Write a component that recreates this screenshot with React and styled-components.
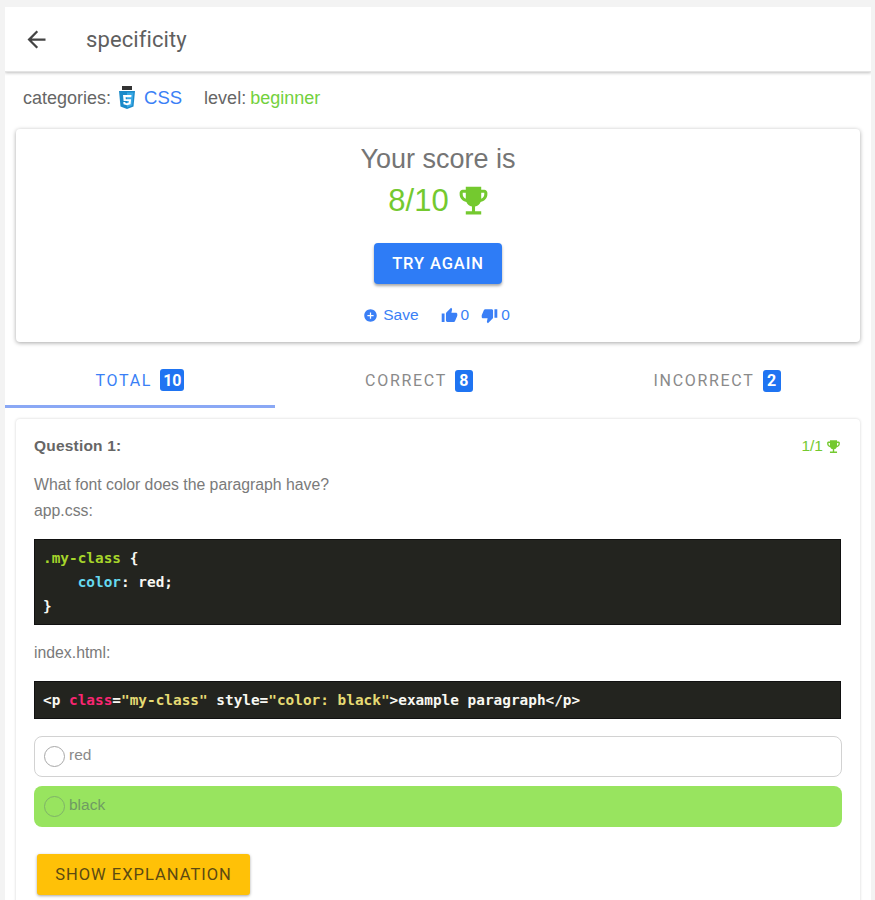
import styled, { createGlobalStyle } from 'styled-components';
import {
  MdArrowBack,
  MdEmojiEvents,
  MdAddCircle,
  MdThumbUp,
  MdThumbDown,
} from 'react-icons/md';

const GlobalStyle = createGlobalStyle`
  html, body {
    margin: 0;
    background: #f3f3f3;
    height: 900px;
    overflow: hidden;
  }
  * {
    box-sizing: border-box;
  }
`;

const Page = styled.div`
  margin: 7px 4px 0 5px;
  height: 893px;
  overflow: hidden;
  background: #fff;
  font-family: 'Liberation Sans', Arial, sans-serif;
  color: #666;
`;

const Toolbar = styled.header`
  height: 65px;
  display: flex;
  align-items: center;
  padding: 0 0 0 18px;
  gap: 36px;
  background: #fff;
  border-bottom: 1px solid #e4e4e4;
  box-shadow: 0 1px 3px rgba(0, 0, 0, 0.25);
  color: #444;
  svg {
    font-size: 27px;
  }
`;

const Title = styled.h1`
  margin: 0;
  font-family: Roboto, sans-serif;
  font-size: 22px;
  font-weight: 400;
  letter-spacing: 0.1px;
  color: #5f5f5f;
`;

const Meta = styled.div`
  height: 57px;
  padding: 0 0 5px 18px;
  display: flex;
  align-items: center;
  font-size: 18px;
  color: #666;
`;

const MetaLabel = styled.span`
  margin-right: ${(p) => p.$gap || 0}px;
`;

const CategoryLink = styled.span`
  color: #3a7ff6;
  font-size: 18.5px;
  margin: 0 22px 0 8px;
`;

const Level = styled.span`
  color: #73d13d;
  margin-left: 4px;
`;

const ScoreCard = styled.section`
  margin: 0 11px;
  height: 213px;
  padding-top: 14px;
  display: flex;
  flex-direction: column;
  align-items: center;
  border-radius: 4px;
  background: #fff;
  box-shadow: 0 1px 4px rgba(0, 0, 0, 0.35);
`;

const ScoreTitle = styled.div`
  font-size: 27px;
  line-height: 32px;
  color: #757575;
`;

const ScoreValue = styled.div`
  margin-top: 7px;
  display: flex;
  align-items: center;
  gap: 6px;
  font-size: 31px;
  line-height: 36px;
  color: #74c92f;
  svg {
    font-size: 37px;
    margin-right: -4px;
  }
`;

const TryAgain = styled.button`
  margin-top: 24px;
  width: 128px;
  height: 41px;
  border: none;
  border-radius: 4px;
  background: #2e7cf6;
  color: #fff;
  font-family: Roboto, sans-serif;
  font-size: 16.5px;
  font-weight: 500;
  letter-spacing: 0.9px;
  box-shadow: 0 2px 3px rgba(0, 0, 0, 0.35);
`;

const Actions = styled.div`
  margin: 22px 3px 0 0;
  display: flex;
  align-items: center;
  font-size: 15.5px;
  color: #3a7ff6;
`;

const Action = styled.span`
  display: flex;
  align-items: center;
  gap: ${(p) => p.$gap}px;
  margin-right: ${(p) => p.$after}px;
  svg {
    font-size: ${(p) => p.$icon}px;
  }
`;

const Tabs = styled.nav`
  height: 66px;
  display: grid;
  grid-template-columns: 270px 288px 308px;
`;

const Tab = styled.div`
  display: flex;
  align-items: center;
  justify-content: center;
  gap: 8px;
  padding-top: ${(p) => (p.$active ? 13 : 14)}px;
  padding-bottom: ${(p) => (p.$active ? 0 : 3)}px;
  font-family: Roboto, sans-serif;
  font-size: 16px;
  letter-spacing: 1.7px;
  color: ${(p) => (p.$active ? '#3a7ff6' : '#8a8a8a')};
  border-bottom: ${(p) => (p.$active ? '3px solid #8aa8f5' : 'none')};
`;

const Badge = styled.span`
  min-width: 18px;
  height: 22px;
  padding: 0 3px;
  display: flex;
  align-items: center;
  justify-content: center;
  border-radius: 3px;
  background: #1f74f2;
  color: #fff;
  font-size: 16px;
  font-weight: 700;
  letter-spacing: 0;
`;

const QuestionCard = styled.section`
  margin: 11px 11px 0;
  padding: 18px 19px 0 18px;
  height: 520px;
  border-radius: 4px;
  background: #fff;
  box-shadow: 0 0 3px rgba(0, 0, 0, 0.18);
`;

const QuestionHead = styled.div`
  display: flex;
  justify-content: space-between;
  align-items: center;
  height: 18px;
  font-size: 15.5px;
`;

const QuestionNumber = styled.strong`
  color: #666;
  letter-spacing: 0.2px;
`;

const Points = styled.span`
  display: flex;
  align-items: center;
  gap: 2px;
  margin-right: -1px;
  color: #74c92f;
  svg {
    font-size: 17px;
  }
`;

const Prompt = styled.p`
  margin: ${(p) => p.$top}px 0 0;
  font-size: 15.8px;
  line-height: 20px;
  color: #7a7a7a;
`;

const Code = styled.pre`
  margin: ${(p) => p.$top}px 0 0;
  padding: 6px 8px;
  background: #23241f;
  border: 1px solid #111;
  font-family: 'DejaVu Sans Mono', monospace;
  font-size: 14.4px;
  font-weight: 700;
  line-height: 24px;
  color: #f8f8f2;
`;

const Token = styled.span`
  color: ${(p) => p.$color};
`;

const Choice = styled.div`
  height: 41px;
  margin: ${(p) => p.$top}px -1px 0 0;
  padding: 0 9px;
  display: flex;
  align-items: center;
  gap: 4px;
  border-radius: 8px;
  border: ${(p) => (p.$correct ? 'none' : '1px solid #d2d2d2')};
  background: ${(p) => (p.$correct ? '#98e45f' : '#fff')};
  font-size: 15.5px;
  color: ${(p) => (p.$correct ? '#6f9b63' : '#8a8a8a')};
`;

const Radio = styled.span`
  width: 21px;
  height: 21px;
  margin-left: ${(p) => (p.$correct ? 1 : 0)}px;
  border-radius: 50%;
  border: 1.5px solid ${(p) => (p.$correct ? '#7fb269' : '#a8a8a8')};
`;

const ChoiceText = styled.span`
  margin-bottom: 3px;
`;

const ExplainButton = styled.button`
  display: block;
  margin: 27px 0 0 3px;
  width: 213px;
  height: 41px;
  border: none;
  border-radius: 3px;
  background: #ffc107;
  color: #5c4a12;
  font-family: Roboto, sans-serif;
  font-size: 16.5px;
  letter-spacing: 1px;
  box-shadow: 0 1px 3px rgba(0, 0, 0, 0.35);
`;

const CssLogo = () => (
  <svg width="18" height="24" viewBox="0 0 18 24" aria-hidden="true">
    <rect x="4" y="0" width="10" height="4" fill="#333" />
    <path d="M1 5h16l-1.5 15.5L9 23l-6.5-2.5z" fill="#1b8ac9" />
    <path d="M9 6.500h6.500L14.200 19.600 9 21.500z" fill="#39a9e6" />
    <path
      d="M5 9h8.500l-.2 2.200H7.600l.2 2h5.300l-.5 5L9 19.200l-3.500-1-.2-2.300h2l.1 1L9 17.200l1.600-.4.200-1.700H5.600z"
      fill="#fff"
    />
  </svg>
);

export default function App() {
  return (
    <>
      <GlobalStyle />
      <Page>
        <Toolbar>
          <MdArrowBack />
          <Title>specificity</Title>
        </Toolbar>
        <Meta>
          <MetaLabel $gap={7}>categories:</MetaLabel>
          <CssLogo />
          <CategoryLink>CSS</CategoryLink>
          <MetaLabel>level:</MetaLabel>
          <Level>beginner</Level>
        </Meta>
        <ScoreCard>
          <ScoreTitle>Your score is</ScoreTitle>
          <ScoreValue>
            8/10 <MdEmojiEvents />
          </ScoreValue>
          <TryAgain>TRY AGAIN</TryAgain>
          <Actions>
            <Action $gap={5} $after={22} $icon={15}>
              <MdAddCircle /> Save
            </Action>
            <Action $gap={3} $after={12} $icon={17}>
              <MdThumbUp /> 0
            </Action>
            <Action $gap={3} $after={0} $icon={17}>
              <MdThumbDown /> 0
            </Action>
          </Actions>
        </ScoreCard>
        <Tabs>
          <Tab $active>
            TOTAL <Badge>10</Badge>
          </Tab>
          <Tab>
            CORRECT <Badge>8</Badge>
          </Tab>
          <Tab>
            INCORRECT <Badge>2</Badge>
          </Tab>
        </Tabs>
        <QuestionCard>
          <QuestionHead>
            <QuestionNumber>Question 1:</QuestionNumber>
            <Points>
              1/1 <MdEmojiEvents />
            </Points>
          </QuestionHead>
          <Prompt $top={20}>What font color does the paragraph have?</Prompt>
          <Prompt $top={6}>app.css:</Prompt>
          <Code $top={18}>
            <Token $color="#a6d52b">.my-class</Token> {'{'}
            {'\n    '}
            <Token $color="#66d9ef">color</Token>: red;{'\n'}
            {'}'}
          </Code>
          <Prompt $top={18}>index.html:</Prompt>
          <Code $top={18}>
            {'<p '}
            <Token $color="#f92672">class</Token>=
            <Token $color="#e6db74">"my-class"</Token> style=
            <Token $color="#e6db74">"color: black"</Token>
            {'>example paragraph</p>'}
          </Code>
          <Choice $top={17}>
            <Radio />
            <ChoiceText>red</ChoiceText>
          </Choice>
          <Choice $top={9} $correct>
            <Radio $correct />
            <ChoiceText>black</ChoiceText>
          </Choice>
          <ExplainButton>SHOW EXPLANATION</ExplainButton>
        </QuestionCard>
      </Page>
    </>
  );
}
